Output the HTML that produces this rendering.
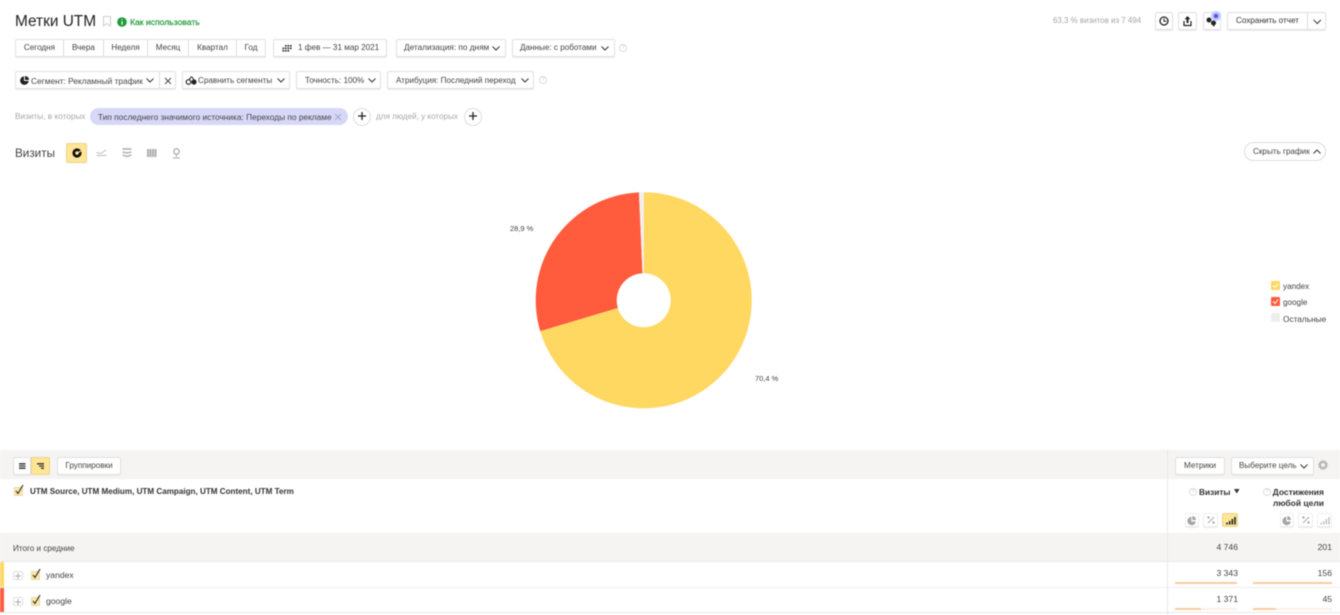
<!DOCTYPE html>
<html><head><meta charset="utf-8"><style>
html,body{margin:0;padding:0;background:#fff}
#p{position:relative;width:1340px;height:615px;overflow:hidden;background:#fff;font-family:"Liberation Sans",sans-serif;font-size:8.15px;color:#333;filter:blur(.4px)}
#p div,#p span.t{position:absolute;white-space:nowrap;box-sizing:border-box}
.b{background:#fff;border:1px solid #e0e0e0;border-radius:2px;box-shadow:0 1px 0 #ebebeb}
.c{display:flex;align-items:center;justify-content:center;color:#444}
.l{border-left:1px solid #dcdcdc;top:0;bottom:0;width:1px}
.g{color:#a8a8a8}
.n{font-size:8.6px}
svg{position:absolute;overflow:visible}
.ch{fill:none;stroke:#333;stroke-width:1}
.q{position:absolute;width:8px;height:8px;border:1px solid #ddd;border-radius:50%;font-size:6px;line-height:7px;text-align:center;color:#ccc;box-sizing:border-box}
</style></head><body><div id="p">

<div style="left:15px;top:11.500px;font-size:15.400px;line-height:20px;color:#222">Метки UTM</div>
<svg style="left:103px;top:16px" width="8" height="11"><path d="M.5.5h7v9.5l-3.500-2.500-3.500 2.500z" fill="none" stroke="#ccc"/></svg>
<svg style="left:117px;top:17px" width="10" height="10"><circle cx="5" cy="5" r="4.800" fill="#1d9a3a"/><path d="M5 2v1M5 4.300v3.500" stroke="#fff" stroke-width="1.200"/></svg>
<div style="left:130px;top:16px;line-height:12px;color:#1f9a36;font-size:8.600px;-webkit-text-stroke:.2px #1f9a36">Как использовать</div>

<div style="left:1053px;top:15px;line-height:12px;color:#a5a5a5;font-size:7.950px">63,3 % визитов из 7 494</div>
<div class="b c" style="left:1155px;top:12px;width:18px;height:18px"></div>
<svg style="left:1159px;top:16px" width="10" height="10"><circle cx="5" cy="5" r="4" fill="none" stroke="#222" stroke-width="1.300"/><path d="M5 2.500V5.300H7.500" fill="none" stroke="#222"/></svg>
<div class="b c" style="left:1178px;top:12px;width:19px;height:18px"></div>
<svg style="left:1183px;top:16px" width="9" height="11"><path d="M4.500 0L7.500 3.300H5.500V7H3.500V3.300H1.500z" fill="#222"/><path d="M1 5v4.500H8V5" fill="none" stroke="#222" stroke-width="1.200"/></svg>
<div class="b c" style="left:1203px;top:12px;width:18px;height:18px"></div>
<svg style="left:1206px;top:15px" width="12" height="12"><circle cx="3" cy="5" r="2.500" fill="#222"/><circle cx="7.500" cy="8" r="2.500" fill="#222"/><path d="M6 9l2 3 1-3z" fill="#222"/></svg>
<svg style="left:1211px;top:11px" width="10" height="10"><circle cx="5" cy="5" r="5" fill="#c5c8fa"/><circle cx="5" cy="5" r="2.300" fill="#5a5cf0"/></svg>
<div class="b" style="left:1227px;top:12px;width:99px;height:18px"><div class="c" style="left:0;top:0;width:79px;height:15px;color:#333">Сохранить отчет</div><div class="l" style="left:79px"></div></div>
<svg class="" style="left:1313px;top:19px" width="9" height="6"><path class="ch" d="M.5.800L4.300 4.500 8 .8"/></svg>

<div class="b" style="left:15px;top:39px;width:251px;height:18px">
<div class="c" style="left:0;top:0;width:47px;height:15px">Сегодня</div><div class="l" style="left:47px"></div>
<div class="c" style="left:48px;top:0;width:39px;height:15px">Вчера</div><div class="l" style="left:87px"></div>
<div class="c" style="left:88px;top:0;width:43px;height:15px">Неделя</div><div class="l" style="left:131px"></div>
<div class="c" style="left:132px;top:0;width:40px;height:15px">Месяц</div><div class="l" style="left:172px"></div>
<div class="c" style="left:173px;top:0;width:47px;height:15px">Квартал</div><div class="l" style="left:220px"></div>
<div class="c" style="left:221px;top:0;width:28px;height:15px">Год</div>
</div>
<div class="b" style="left:273px;top:39px;width:114px;height:18px"></div>
<svg style="left:282px;top:44px" width="11" height="8"><path d="M3 1h1.600v1.600H3zM5.500 1h1.600v1.600H5.500zM8 1h1.600v1.600H8zM.5 3.500h1.600v1.600H.5zM3 3.500h1.600v1.600H3zM5.500 3.500h1.600v1.600H5.500zM8 3.500h1.600v1.600H8zM.5 6h1.600v1.600H.5zM3 6h1.600v1.600H3zM5.500 6h1.600v1.600H5.500z" fill="#222"/></svg>
<div style="left:298px;top:42px;line-height:12px;color:#444">1 фев — 31 мар 2021</div>
<div class="b" style="left:396px;top:39px;width:110px;height:18px"></div>
<div style="left:404px;top:42px;line-height:12px;color:#444;font-size:8.250px">Детализация: по дням</div>
<svg style="left:492px;top:46px" width="8" height="5"><path class="ch" d="M.5.500L4 4 7.500.5"/></svg>
<div class="b" style="left:512px;top:39px;width:103px;height:18px"></div>
<div style="left:520px;top:42px;line-height:12px;color:#444">Данные: с роботами</div>
<svg style="left:601px;top:46px" width="8" height="5"><path class="ch" d="M.5.500L4 4 7.500.5"/></svg>
<div class="q" style="left:619px;top:44px">?</div>

<div class="b" style="left:15px;top:71px;width:161px;height:18px"><div class="l" style="left:143px"></div></div>
<svg style="left:20px;top:76px" width="9" height="9"><path d="M4 .3A4.300 4.300 0 1 0 8.700 5H4z" fill="#222"/><path d="M5 0A4 4 0 0 1 9 4H5z" fill="#222"/></svg>
<div style="left:31px;top:75px;line-height:12px;color:#444;font-size:8.350px">Сегмент: Рекламный трафик</div>
<svg style="left:146px;top:78px" width="8" height="5"><path class="ch" d="M.5.500L4 4 7.500.5"/></svg>
<svg style="left:163.500px;top:76.500px" width="8" height="8"><path d="M1 1l6 6M7 1L1 7" stroke="#444" stroke-width=".9"/></svg>
<div class="b" style="left:182px;top:71px;width:108px;height:18px"></div>
<svg style="left:186px;top:76px" width="11" height="9"><circle cx="2.500" cy="6" r="2.300" fill="none" stroke="#222" stroke-width="1.200"/><circle cx="8" cy="6" r="2.600" fill="#222"/><path d="M3 4L5 1h1l2 3" fill="none" stroke="#222"/></svg>
<div style="left:198px;top:75px;line-height:12px;color:#444">Сравнить сегменты</div>
<svg style="left:277px;top:78px" width="8" height="5"><path class="ch" d="M.5.500L4 4 7.500.5"/></svg>
<div class="b" style="left:296px;top:71px;width:85px;height:18px"></div>
<div style="left:305px;top:75px;line-height:12px;color:#444">Точность: 100%</div>
<svg style="left:368px;top:78px" width="8" height="5"><path class="ch" d="M.5.500L4 4 7.500.5"/></svg>
<div class="b" style="left:387px;top:71px;width:147px;height:18px"></div>
<div style="left:396px;top:75px;line-height:12px;color:#444">Атрибуция: Последний переход</div>
<svg style="left:521px;top:78px" width="8" height="5"><path class="ch" d="M.5.500L4 4 7.500.5"/></svg>
<div class="q" style="left:539px;top:76px">?</div>

<div class="g" style="left:15px;top:111px;line-height:12px;font-size:8.250px">Визиты, в которых</div>
<div style="left:90px;top:108px;width:258px;height:17px;border-radius:9px;background:#d7d8f8"></div>
<div style="left:98px;top:111px;line-height:12px;color:#444;font-size:8.320px">Тип последнего значимого источника: Переходы по рекламе</div>
<svg style="left:334px;top:113px" width="8" height="8"><path d="M1 1l6 6M7 1L1 7" stroke="#9a9ab5" stroke-width=".8"/></svg>
<div style="left:353px;top:108px;width:18px;height:18px;border-radius:50%;border:1px solid #ddd;background:#fff"></div>
<svg style="left:358px;top:112px" width="8" height="8"><path d="M4 0v8M0 4h8" stroke="#222" stroke-width="1.300"/></svg>
<div class="g" style="left:376px;top:111px;line-height:12px">для людей, у которых</div>
<div style="left:464px;top:108px;width:18px;height:18px;border-radius:50%;border:1px solid #ddd;background:#fff"></div>
<svg style="left:469px;top:112px" width="8" height="8"><path d="M4 0v8M0 4h8" stroke="#222" stroke-width="1.300"/></svg>

<div style="left:15px;top:146px;font-size:11.700px;line-height:16px;color:#444">Визиты</div>
<div style="left:66px;top:143px;width:21px;height:20px;background:#ffe596;border:1px solid #e8d48c;border-radius:2px"></div>
<svg style="left:72px;top:148px" width="10" height="10"><circle cx="5" cy="5" r="3.200" fill="none" stroke="#111" stroke-width="2.800"/><path d="M5 5L9 3" stroke="#ffe596" stroke-width="1"/></svg>
<svg style="left:96px;top:149px" width="11" height="8"><path d="M.5 3.500L5 4.500 10 1M.5 6.500h10" fill="none" stroke="#bbb" stroke-width="1"/></svg>
<svg style="left:122px;top:148px" width="10" height="10"><path d="M.5 1h9M.5 4l4.500 1 4.500-1M.5 7l4.500 1.500L9.500 7" fill="none" stroke="#aaa" stroke-width="1.400"/></svg>
<svg style="left:146.500px;top:148px" width="10" height="10"><path d="M1 1v8M3.500 1v8M6 1v8M8.500 1v8" fill="none" stroke="#aaa" stroke-width="1.900"/></svg>
<svg style="left:172px;top:147.500px" width="9" height="11"><circle cx="4.500" cy="3.500" r="2.700" fill="none" stroke="#aaa" stroke-width="1.300"/><path d="M4.500 6.500V9M1 10h7" stroke="#aaa"/></svg>

<div style="left:1244px;top:142px;width:82px;height:19px;border:1px solid #ddd;border-radius:10px;background:#fff"></div>
<div style="left:1253px;top:146px;line-height:12px;color:#444">Скрыть график</div>
<svg style="left:1313px;top:149px" width="8" height="5"><path class="ch" d="M.5 4.500L4 1 7.500 4.500"/></svg>

<svg style="left:0;top:0" width="1340" height="615">
<path d="M643.700 300.300L643.700 192.300A108 108 0 1 1 540.200 331.100Z" fill="#ffd862"/>
<path d="M643.700 300.300L540.200 331.100A108 108 0 0 1 638.950 192.400Z" fill="#ff5b3c"/>
<path d="M643.700 300.300L638.950 192.400A108 108 0 0 1 643.700 192.300Z" fill="#efefef"/>
<circle cx="643.700" cy="300.300" r="27" fill="#fff"/>
</svg>
<div style="left:510px;top:223px;line-height:12px;font-size:7.500px;color:#444">28,9 %</div>
<div style="left:755px;top:373px;line-height:12px;font-size:7.500px;color:#444">70,4 %</div>

<div style="left:1271px;top:281px;width:9px;height:9px;background:#ffd862;border-radius:1px"></div>
<div style="left:1271px;top:297px;width:9px;height:9px;background:#ff5b3c;border-radius:1px"></div>
<svg style="left:1271px;top:281px" width="9" height="25"><path d="M2 4.500l2 2 3-4M2 20.500l2 2 3-4" fill="none" stroke="#fff" stroke-width="1"/></svg>
<div style="left:1271px;top:313px;width:9px;height:9px;background:#eee;border-radius:1px"></div>
<div style="left:1283px;top:281px;line-height:12px;color:#444">yandex</div>
<div style="left:1283px;top:297px;line-height:12px;color:#444">google</div>
<div style="left:1283px;top:313px;line-height:12px;color:#444;font-size:8.300px">Остальные</div>

<div style="left:0;top:450px;width:1340px;height:29px;background:#f5f4f2"></div>
<div style="left:0;top:533px;width:1340px;height:29px;background:#f5f4f2"></div>
<div style="left:0;top:561px;width:1340px;height:1px;background:#e9e9e9"></div>
<div style="left:0;top:587px;width:1340px;height:1px;background:#eeeeee"></div>
<div style="left:0;top:612px;width:1340px;height:1px;background:#e9e9e9"></div>
<div style="left:1167px;top:450px;width:1px;height:165px;background:#e8e8e8"></div>
<div style="left:0;top:562px;width:4px;height:25px;background:#ffd862"></div>
<div style="left:0;top:588px;width:4px;height:24px;background:#ff5b3c"></div>

<div class="b" style="left:13px;top:457px;width:18px;height:18px"></div>
<svg style="left:19px;top:463px" width="7" height="6"><path d="M0 .8h6.500M0 3h6.500M0 5.200h6.500" stroke="#333" stroke-width="1.300"/></svg>
<div style="left:31px;top:457px;width:19px;height:18px;background:#ffe596;border:1px solid #e8d48c;border-radius:0 2px 2px 0"></div>
<svg style="left:37px;top:463px" width="8" height="6"><path d="M0 .8h7M2 3h5M4 5.200h3" stroke="#333" stroke-width="1.300"/></svg>
<div class="b" style="left:57px;top:457px;width:64px;height:18px"><div class="c" style="left:0;top:0;width:62px;height:15px">Группировки</div></div>
<div class="b" style="left:1175px;top:457px;width:50px;height:18px"><div class="c" style="left:0;top:0;width:48px;height:15px">Метрики</div></div>
<div class="b" style="left:1231px;top:457px;width:83px;height:18px"></div>
<div style="left:1239px;top:460px;line-height:12px;color:#444">Выберите цель</div>
<svg style="left:1300px;top:464px" width="8" height="5"><path class="ch" d="M.5.500L4 4 7.500.5"/></svg>
<svg style="left:1318px;top:460px" width="10" height="10"><circle cx="5" cy="5" r="3" fill="none" stroke="#b5b5b5" stroke-width="2"/><circle cx="5" cy="5" r="4.300" fill="none" stroke="#b5b5b5" stroke-width="1.200" stroke-dasharray="1.500 1.200"/></svg>

<div style="left:14px;top:487px;width:9px;height:9px;background:#ffe9a8;border:1px solid #e5d8a8;border-radius:1px"></div>
<svg style="left:14px;top:484px" width="11" height="11"><path d="M2 7l2 2.500L9 1" fill="none" stroke="#333" stroke-width="1.200"/></svg>
<div style="left:30px;top:486px;line-height:12px;font-weight:bold;color:#333;font-size:8.100px">UTM Source, UTM Medium, UTM Campaign, UTM Content, UTM Term</div>

<div class="q" style="left:1189px;top:488px">?</div>
<div style="left:1199px;top:486px;line-height:12px;font-weight:bold;color:#333;font-size:8.300px">Визиты</div>
<svg style="left:1234px;top:489px" width="6" height="5"><path d="M0 0h5.500L2.750 4.500z" fill="#333"/></svg>
<div class="q" style="left:1263px;top:488px">?</div>
<div style="right:16px;top:486px;line-height:12px;font-weight:bold;color:#333;font-size:8.500px">Достижения</div>
<div style="right:16px;top:497px;line-height:12px;font-weight:bold;color:#333;font-size:8.500px">любой цели</div>

<div class="b" style="left:1185px;top:513px;width:14px;height:14px;border-color:#eee"></div>
<div class="b" style="left:1203px;top:513px;width:15px;height:14px;border-color:#eee"></div>
<div style="left:1222px;top:513px;width:16px;height:14px;background:#ffe596;border:1px solid #e8d48c;border-radius:2px"></div>
<div class="b" style="left:1280px;top:513px;width:14px;height:14px;border-color:#eee"></div>
<div class="b" style="left:1298px;top:513px;width:15px;height:14px;border-color:#eee"></div>
<div class="b" style="left:1317px;top:513px;width:15px;height:14px;border-color:#eee"></div>
<svg style="left:1187px;top:515.500px" width="10" height="10"><path d="M4.300.8A4.200 4.200 0 1 0 8.800 5.500H4.300z" fill="#a5a5a5"/><path d="M5.300 0A4 4 0 0 1 9 4H5.300z" fill="#a5a5a5"/></svg>
<svg style="left:1282px;top:515.500px" width="10" height="10"><path d="M4.300.8A4.200 4.200 0 1 0 8.800 5.500H4.300z" fill="#a5a5a5"/><path d="M5.300 0A4 4 0 0 1 9 4H5.300z" fill="#a5a5a5"/></svg>
<svg style="left:1206.500px;top:516px" width="8" height="8"><path d="M1 7L7 1" stroke="#aaa" stroke-width="1"/><circle cx="1.500" cy="1.500" r="1.200" fill="#aaa"/><circle cx="6.500" cy="6.500" r="1.200" fill="#aaa"/></svg>
<svg style="left:1301.500px;top:516px" width="8" height="8"><path d="M1 7L7 1" stroke="#aaa" stroke-width="1"/><circle cx="1.500" cy="1.500" r="1.200" fill="#aaa"/><circle cx="6.500" cy="6.500" r="1.200" fill="#aaa"/></svg>
<svg style="left:1225.500px;top:515.500px" width="10" height="9"><path d="M1 6.500v2M3.700 5v3.500M6.300 3v5.500M9 1v7.500" stroke="#222" stroke-width="1.600"/></svg>
<svg style="left:1320px;top:515.500px" width="10" height="9"><path d="M1 6.500v2M3.700 5v3.500M6.300 3v5.500M9 1v7.500" stroke="#b5b5b5" stroke-width="1.200"/></svg>

<div style="left:13px;top:543px;line-height:12px;color:#444">Итого и средние</div>
<div class="b" style="left:13px;top:571px;width:10px;height:9px;box-shadow:none"></div>
<svg style="left:15px;top:572.500px" width="6" height="6"><path d="M3 0v6M0 3h6" stroke="#aaa"/></svg>
<div class="b" style="left:13px;top:597px;width:10px;height:9px;box-shadow:none"></div>
<svg style="left:15px;top:598.500px" width="6" height="6"><path d="M3 0v6M0 3h6" stroke="#aaa"/></svg>
<div style="left:31px;top:571px;width:9px;height:9px;background:#ffe9a8;border:1px solid #e5d8a8;border-radius:1px"></div>
<svg style="left:31px;top:568px" width="11" height="11"><path d="M2 7l2 2.500L9 1" fill="none" stroke="#333" stroke-width="1.200"/></svg>
<div style="left:31px;top:597px;width:9px;height:9px;background:#ffe9a8;border:1px solid #e5d8a8;border-radius:1px"></div>
<svg style="left:31px;top:594px" width="11" height="11"><path d="M2 7l2 2.500L9 1" fill="none" stroke="#333" stroke-width="1.200"/></svg>
<div class="n" style="left:46px;top:569px;line-height:12px;color:#444">yandex</div>
<div class="n" style="left:46px;top:595px;line-height:12px;color:#444">google</div>

<div class="n" style="right:102px;top:541px;line-height:12px;color:#444">4 746</div>
<div class="n" style="right:8px;top:541px;line-height:12px;color:#444">201</div>
<div class="n" style="right:102px;top:567px;line-height:12px;color:#444">3 343</div>
<div class="n" style="right:8px;top:567px;line-height:12px;color:#444">156</div>
<div class="n" style="right:102px;top:593px;line-height:12px;color:#444">1 371</div>
<div class="n" style="right:8px;top:593px;line-height:12px;color:#444">45</div>

<div style="left:1175px;top:582px;width:62px;height:2px;background:#fccb9e"></div>
<div style="left:1253px;top:582px;width:79px;height:2px;background:#fccb9e"></div>
<div style="left:1175px;top:608px;width:62px;height:2px;background:#fdf0e2"></div>
<div style="left:1175px;top:608px;width:26px;height:2px;background:#fccb9e"></div>
<div style="left:1253px;top:608px;width:79px;height:2px;background:#fdf0e2"></div>
<div style="left:1253px;top:608px;width:23px;height:2px;background:#fccb9e"></div>

</div></body></html>
